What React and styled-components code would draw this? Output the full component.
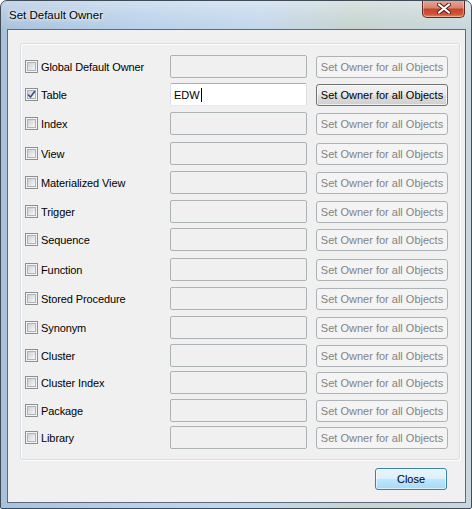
import React from "react"
import styled, { createGlobalStyle } from "styled-components"

const GlobalStyle = createGlobalStyle`
  html, body {
    margin: 0;
    padding: 0;
    background: #ffffff;
  }
  body {
    font-family: "Liberation Sans", Arial, sans-serif;
    font-size: 11px;
  }
`

const Window = styled.div`
  width: 472px;
  height: 509px;
  box-sizing: border-box;
  border: 1px solid #3f4b57;
  border-radius: 7px 7px 2px 2px;
  background: linear-gradient(
    90deg,
    #a9c2dc 0%,
    #b9d1ea 30%,
    #c3d7ec 55%,
    #c6d4cf 75%,
    #c9d6dc 100%
  );
  display: flex;
  flex-direction: column;
  overflow: hidden;
`

const TitleBar = styled.div`
  height: 28px;
  display: flex;
  justify-content: space-between;
  align-items: flex-start;
  background: linear-gradient(
    180deg,
    rgba(255, 255, 255, 0.35) 0%,
    rgba(255, 255, 255, 0.15) 50%,
    rgba(255, 255, 255, 0) 100%
  );
`

const Caption = styled.div`
  padding: 8px 0 0 8px;
  font-size: 11.5px;
  color: #000;
  text-shadow: 0 0 6px rgba(255, 255, 255, 0.9), 0 0 3px rgba(255, 255, 255, 0.9);
`

const CloseCaption = styled.div`
  width: 43px;
  height: 18px;
  margin-right: 6px;
  margin-top: -1px;
  box-sizing: border-box;
  border: 1px solid #5a2a24;
  border-top: none;
  border-radius: 0 0 5px 5px;
  background: linear-gradient(
    180deg,
    #e9a99b 0%,
    #d9826f 45%,
    #c5442b 55%,
    #d1573b 85%,
    #e98a64 100%
  );
  box-shadow: inset 0 0 0 1px rgba(255, 255, 255, 0.35);
  display: flex;
  align-items: center;
  justify-content: center;
`

const Client = styled.div`
  margin: 0 5px 5px 6px;
  flex: 1;
  border: 1px solid #5b6b7b;
  background: #f0f0f0;
  display: flex;
  flex-direction: column;
  padding: 13px 5px 0 12px;
`

const GroupBox = styled.div`
  height: 417px;
  box-sizing: border-box;
  border: 1px solid #d5dfe5;
  border-radius: 3px;
  box-shadow: inset 1px 1px 0 #ffffff, 1px 1px 0 #ffffff;
  padding: 11px 0 0 4px;
  display: flex;
  flex-direction: column;
`

const Row = styled.div`
  height: 23px;
  margin-bottom: ${p => p.$gap}px;
  display: flex;
  align-items: center;
`

const CheckLabel = styled.label`
  width: 145px;
  display: flex;
  align-items: center;
  gap: 3px;
  color: #000;
  white-space: nowrap;
  letter-spacing: -0.1px;
`

const Box = styled.span`
  width: 13px;
  height: 13px;
  box-sizing: border-box;
  border: 1px solid #8e8f8f;
  background: #f4f4f4;
  display: flex;
  align-items: center;
  justify-content: center;
  position: relative;
  &::before {
    content: "";
    position: absolute;
    inset: 1px;
    border: 1px solid #aeb3b9;
    background: linear-gradient(135deg, #cbcfd5 0%, #e6e8eb 60%, #f7f7f8 100%);
  }
  svg {
    position: relative;
  }
`

const Field = styled.div`
  width: 137px;
  height: 23px;
  box-sizing: border-box;
  border: 1px solid ${p => (p.$active ? "#abadb3" : "#adb2b5")};
  border-left-color: ${p => (p.$active ? "#dbdfe6" : "#adb2b5")};
  border-right-color: ${p => (p.$active ? "#dbdfe6" : "#adb2b5")};
  border-bottom-color: ${p => (p.$active ? "#e3e9ef" : "#adb2b5")};
  border-radius: 2px;
  background: ${p => (p.$active ? "#ffffff" : "#f0f0f0")};
  padding: 0 3px;
  display: flex;
  align-items: center;
  color: #000;
`

const Caret = styled.span`
  width: 1px;
  height: 14px;
  background: #000;
  margin-left: 1px;
`

const Button = styled.div`
  width: 132px;
  height: 22px;
  margin-left: 9px;
  box-sizing: border-box;
  border-radius: 3px;
  display: flex;
  align-items: center;
  justify-content: center;
  white-space: nowrap;
  ${p =>
    p.$enabled
      ? `
    border: 1px solid #707070;
    color: #000;
    background: linear-gradient(180deg, #f2f2f2 0%, #ebebeb 48%, #dddddd 52%, #cfcfcf 100%);
    box-shadow: inset 0 0 0 1px rgba(255,255,255,0.7);
  `
      : `
    border: 1px solid #adb2b5;
    color: #838383;
    background: #f4f4f4;
  `}
`

const Footer = styled.div`
  display: flex;
  justify-content: flex-end;
  padding: 8px 13px 0 0;
`

const CloseButton = styled.div`
  width: 72px;
  height: 22px;
  box-sizing: border-box;
  border: 1px solid #3c7fb1;
  border-radius: 3px;
  background: linear-gradient(180deg, #eaf6fd 0%, #d9f0fc 48%, #bee6fd 52%, #a7d9f5 100%);
  box-shadow: inset 0 0 0 1px rgba(255, 255, 255, 0.6);
  display: flex;
  align-items: center;
  justify-content: center;
  color: #000;
`

const rows = [
  { label: "Global Default Owner", gap: 5 },
  { label: "Table", gap: 6, checked: true, value: "EDW" },
  { label: "Index", gap: 7 },
  { label: "View", gap: 6 },
  { label: "Materialized View", gap: 6 },
  { label: "Trigger", gap: 5 },
  { label: "Sequence", gap: 7 },
  { label: "Function", gap: 6 },
  { label: "Stored Procedure", gap: 6 },
  { label: "Synonym", gap: 5 },
  { label: "Cluster", gap: 4 },
  { label: "Cluster Index", gap: 5 },
  { label: "Package", gap: 4 },
  { label: "Library", gap: 0 },
]

const CheckMark = () => (
  <svg width="9" height="9" viewBox="0 0 9 9">
    <path d="M1 4.5 L3.5 7 L8 1" fill="none" stroke="#3b4f8c" strokeWidth="1.6" />
  </svg>
)

const CloseX = () => (
  <svg width="14" height="11" viewBox="0 0 14 11">
    <path
      d="M2 1.5 L12 9.5 M12 1.5 L2 9.5"
      stroke="#4a1f1a"
      strokeWidth="4"
      strokeLinecap="round"
    />
    <path
      d="M2 1.5 L12 9.5 M12 1.5 L2 9.5"
      stroke="#ffffff"
      strokeWidth="2.2"
      strokeLinecap="round"
    />
  </svg>
)

const App = () => {
  return (
    <>
      <GlobalStyle />
      <Window>
        <TitleBar>
          <Caption>Set Default Owner</Caption>
          <CloseCaption>
            <CloseX />
          </CloseCaption>
        </TitleBar>
        <Client>
          <GroupBox>
            {rows.map(r => (
              <Row key={r.label} $gap={r.gap}>
                <CheckLabel>
                  <Box>{r.checked && <CheckMark />}</Box>
                  {r.label}
                </CheckLabel>
                <Field $active={r.checked}>
                  {r.value}
                  {r.checked && <Caret />}
                </Field>
                <Button $enabled={r.checked}>Set Owner for all Objects</Button>
              </Row>
            ))}
          </GroupBox>
          <Footer>
            <CloseButton>Close</CloseButton>
          </Footer>
        </Client>
      </Window>
    </>
  )
}

export default App
